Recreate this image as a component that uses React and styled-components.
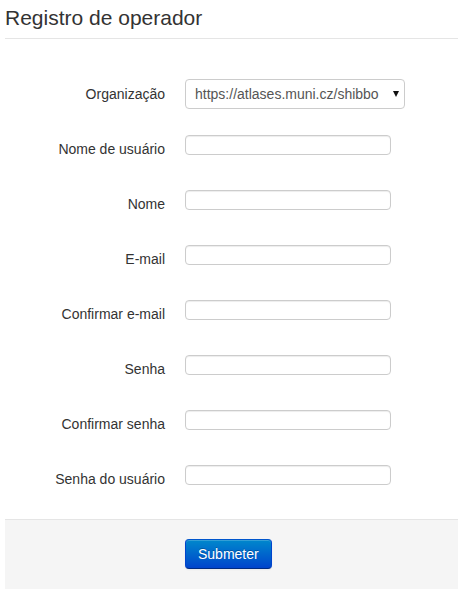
import React from 'react';
import styled, { createGlobalStyle } from 'styled-components';

/*CSS*/

const GlobalStyle = createGlobalStyle`
    html, body {
        margin: 0;
        padding: 0;
        background: #fff;
    }
    body {
        font-family: "Liberation Sans", Helvetica, Arial, sans-serif;
        font-size: 14px;
        line-height: 20px;
        color: #333;
    }
`;

const Page = styled.div`
    margin-left: 5px;
`;

const Legend = styled.h1`
    margin: 0;
    padding: 0 0 2px 0;
    font-size: 21px;
    font-weight: normal;
    line-height: 36px;
    color: #333;
    border-bottom: 1px solid #e5e5e5;
`;

const Fields = styled.div`
    padding-top: 40px;
`;

const Row = styled.div`
    display: grid;
    grid-template-columns: 160px 1fr;
    column-gap: 20px;
    align-items: start;
    min-height: 25px;
    margin-bottom: ${props => (props.$first ? '26px' : '30px')};

    &:last-child {
        margin-bottom: 29px;
    }
`;

const Label = styled.label`
    padding-top: ${props => (props.$first ? '5px' : '4px')};
    line-height: 20px;
    text-align: right;
    color: #333;
    white-space: nowrap;
`;

const TextInput = styled.input`
    box-sizing: border-box;
    width: 206px;
    height: 20px;
    margin: 0;
    padding: 0 6px;
    border: 1px solid #ccc;
    border-radius: 4px;
    background: #fff;
    font: inherit;
    color: #555;
    box-shadow: inset 0 1px 1px rgba(0, 0, 0, 0.075);

    &:focus {
        outline: none;
        border-color: rgba(82, 168, 236, 0.8);
    }
`;

const Select = styled.div`
    box-sizing: border-box;
    width: 220px;
    height: 30px;
    display: flex;
    align-items: center;
    padding: 0 5px 0 9px;
    border: 1px solid #ccc;
    border-radius: 4px;
    background: #fff;
    color: #555;
    cursor: pointer;
`;

const SelectText = styled.span`
    flex: 1;
    overflow: hidden;
    white-space: nowrap;
`;

const Caret = styled.span`
    flex: none;
    width: 0;
    height: 0;
    margin-left: 4px;
    border-left: 3.5px solid transparent;
    border-right: 3.5px solid transparent;
    border-top: 6px solid #111;
`;

const Actions = styled.div`
    padding: 19px 20px 20px 180px;
    background: #f5f5f5;
    border-top: 1px solid #e5e5e5;
`;

const SubmitButton = styled.button`
    box-sizing: border-box;
    height: 30px;
    margin: 0;
    padding: 4px 12px;
    font: inherit;
    font-size: 14px;
    line-height: 20px;
    color: #fff;
    text-shadow: 0 -1px 0 rgba(0, 0, 0, 0.25);
    background-image: linear-gradient(to bottom, #0088cc, #0044cc);
    border: 1px solid #0044cc;
    border-color: #0055cc #0044cc #002a80;
    border-radius: 4px;
    box-shadow: inset 0 1px 0 rgba(255, 255, 255, 0.2), 0 1px 2px rgba(0, 0, 0, 0.05);
    cursor: pointer;
`;

const fields = [
    { id: 'login', label: 'Nome de usuário' },
    { id: 'name', label: 'Nome' },
    { id: 'email', label: 'E-mail' },
    { id: 'email2', label: 'Confirmar e-mail' },
    { id: 'password', label: 'Senha', type: 'password' },
    { id: 'password2', label: 'Confirmar senha', type: 'password' },
    { id: 'userpassword', label: 'Senha do usuário', type: 'password' },
];

export default function App() {
    return (
        <Page>
            <GlobalStyle />
            <Legend>Registro de operador</Legend>
            <form onSubmit={e => e.preventDefault()}>
                <Fields>
                    <Row $first>
                        <Label $first>Organização</Label>
                        <Select>
                            <SelectText>https://atlases.muni.cz/shibbo</SelectText>
                            <Caret />
                        </Select>
                    </Row>
                    {fields.map(f => (
                        <Row key={f.id}>
                            <Label htmlFor={f.id}>{f.label}</Label>
                            <TextInput id={f.id} type={f.type || 'text'} />
                        </Row>
                    ))}
                </Fields>
                <Actions>
                    <SubmitButton type="submit">Submeter</SubmitButton>
                </Actions>
            </form>
        </Page>
    );
}
